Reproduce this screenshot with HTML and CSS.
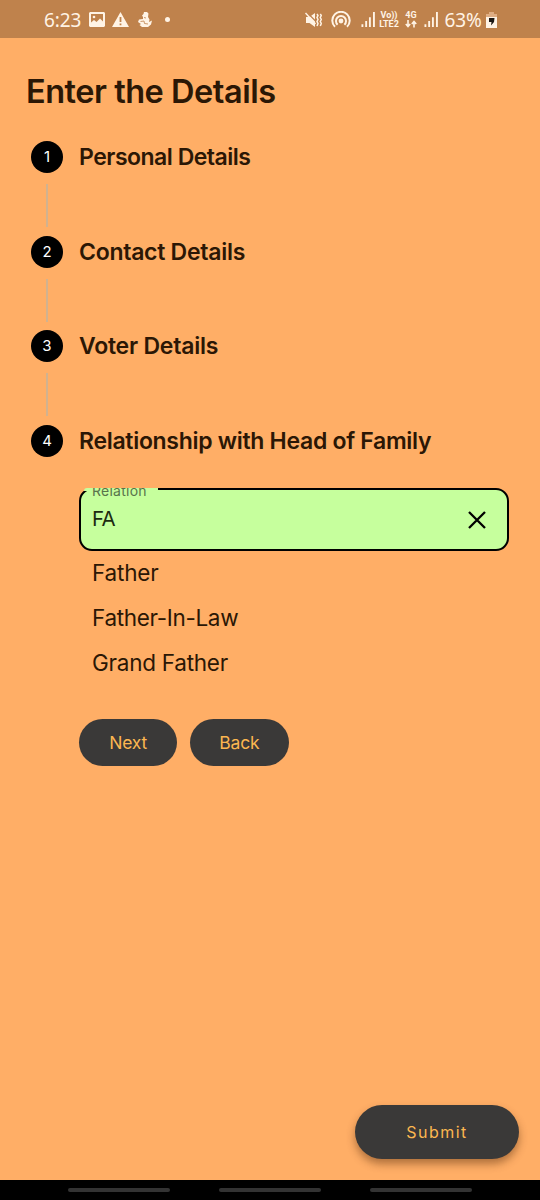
FILE: index.html
```html
<!DOCTYPE html>
<html lang="en">
<head>
<meta charset="utf-8">
<title>Enter the Details</title>
<link rel="stylesheet" href="styles.css">
</head>
<body>
<header class="status">
  <div class="status-left">
    <span class="clock">6:23</span>
    <svg class="i-photo" width="16" height="15" viewBox="0 0 16 15"><path fill-rule="evenodd" d="M1 0h14l1 1v13l-1 1H1l-1-1V1zM2 2v8.500L5 8l2.500 2L11 6.500l3 3V2z"/><circle cx="5" cy="5" r="1.300"/></svg>
    <svg class="i-warn" width="17" height="15" viewBox="0 0 17 15"><path fill-rule="evenodd" d="M8.500 0L17 15H0zM7.600 5v5h1.800V5zM7.600 11.500v1.800h1.800v-1.800z"/></svg>
    <svg class="i-person" width="14" height="15" viewBox="0 0 14 15"><path d="M6 0h3l1.500 1.500L10 5l1.500 2.500L11 10l3-1.500-1 4-3 2.500H4l-2.500-2 1.500-1-3-2 1-2.500L5 7V5L4 3.500 5.500 2z"/><path class="cut" d="M2.500 9.500L6 9l.5 2.500L10 12M6 5.500l2 .5"/></svg>
    <i class="dot"></i>
  </div>
  <div class="status-right">
    <svg class="i-mute" width="17" height="16" viewBox="0 0 17 16"><path d="M1 5h3.500L10 1v14l-5.500-4H1z"/><path class="gap" d="M2.500 1l8 8"/><path class="line thin" d="M.5 1l10 11"/><path class="line thin" d="M12 2l1 1.500-1 2 1 2-1 2 1 2-1 2.500M15.300 2l1 1.500-1 2 1 2-1 2 1 2-1 2.500"/></svg>
    <svg class="i-cast" width="20" height="17" viewBox="0 0 20 17"><circle cx="10" cy="10" r="2.400"/><path class="line bold" d="M6.600 13.700a5 5 0 1 1 6.800 0M4 15.800a8.700 8.700 0 1 1 12 0"/></svg>
    <svg class="i-signal" width="15" height="15" viewBox="0 0 15 16"><path d="M0 13h2v3H0zM4 9.500h2V16H4zM8 5.500h2V16H8zM12.300 0h2v16h-2z"/></svg>
    <span class="net"><b class="volte">Vo))</b><b class="lte">LTE2</b></span>
    <span class="net net-4g"><b>4G</b><svg width="12" height="8" viewBox="0 0 12 8"><path class="line" d="M3 0v6M.8 4L3 6.500 5.200 4M9 7.500V1.500M6.800 4L9 1.500 11.200 4"/></svg></span>
    <svg class="i-signal2" width="15" height="15" viewBox="0 0 15 16"><path d="M0 13h2v3H0zM4 9.500h2V16H4zM8 5.500h2V16H8zM12.300 0h2v16h-2z"/></svg>
    <span class="percent">63%</span>
    <svg class="i-battery" width="11" height="16" viewBox="0 0 11 16"><path class="faded" d="M3 0h5v2h3v4H0V2h3z"/><path d="M0 5h11v11H0z"/><path class="bolt" d="M3 6h5.500L8 10l-3 3.500.5-3.500H3z"/></svg>
  </div>
</header>
<main class="page">
  <h1 class="title">Enter the Details</h1>
  <ol class="steps">
    <li class="step"><div class="rail"><span class="badge">1</span><i class="link"></i></div><h2 class="label l1">Personal Details</h2></li>
    <li class="step"><div class="rail"><span class="badge">2</span><i class="link"></i></div><h2 class="label l2">Contact Details</h2></li>
    <li class="step"><div class="rail"><span class="badge">3</span><i class="link"></i></div><h2 class="label l3">Voter Details</h2></li>
    <li class="step last"><div class="rail"><span class="badge">4</span></div><h2 class="label l4">Relationship with Head of Family</h2></li>
  </ol>
  <section class="form">
    <div class="field">
      <i class="notch"></i>
      <div class="caption-clip"><span class="caption">Relation</span></div>
      <span class="value">FA</span>
      <svg class="clear" width="18" height="18" viewBox="0 0 18 18"><path d="M1 1l16 16M17 1L1 17"/></svg>
    </div>
    <ul class="options">
      <li class="o1">Father</li>
      <li class="o2">Father-In-Law</li>
      <li class="o3">Grand Father</li>
    </ul>
    <div class="actions"><button class="pill next">Next</button><button class="pill back">Back</button></div>
  </section>
  <button class="submit">Submit</button>
</main>
<footer class="nav"><i></i><i></i><i></i></footer>
</body>
</html>
```
FILE: styles.css
```css
* { box-sizing: border-box; }
body {
  margin: 0;
  width: 540px;
  height: 1200px;
  display: flex;
  flex-direction: column;
  overflow: hidden;
  background: #ffae66;
  color: #2b1705;
  font-family: Inter, "Liberation Sans", sans-serif;
}
h1, h2, ol, ul { margin: 0; padding: 0; list-style: none; }
button { border: 0; padding: 0; font-family: inherit; }

.status {
  height: 38px;
  flex: none;
  display: flex;
  justify-content: space-between;
  padding: 0 44px;
  background: #bf824c;
  color: #fff3e5;
  font-family: "Noto Sans", sans-serif;
}
.status svg { fill: #fff3e5; flex: none; display: block; }
.status .line { fill: none; stroke: #fff3e5; stroke-width: 1.6; }
.status .thin { stroke-width: 1.5; }
.status .bold { stroke-width: 2; }
.status .cut { fill: none; stroke: #bf824c; stroke-width: 0.8; }
.status .gap { fill: none; stroke: #bf824c; stroke-width: 1.2; }
.status .faded { fill: #dfad83; }
.status .bolt { fill: #1b1714; }
.status-left, .status-right { display: flex; align-items: center; height: 39px; }
.clock { width: 45px; font-size: 19px; letter-spacing: -0.1px; }
.i-warn { margin-left: 7px; }
.i-person { margin-left: 9px; }
.dot { width: 5px; height: 5px; margin-left: 13px; border-radius: 50%; background: #fff3e5; }
.i-cast { margin-left: 9px; }
.i-signal { margin-left: 10px; }
.net { display: flex; flex-direction: column; align-items: center; width: 21px; margin-left: 3px; }
.net b { font: 700 9px/9px Roboto, sans-serif; }
.net-4g { width: 13px; margin-left: 5px; }
.i-signal2 { margin-left: 6px; }
.percent { width: 41px; margin-left: 6px; font-size: 19px; letter-spacing: -0.1px; }
.status-right { margin-right: -0.500px; }

.page { flex: 1; display: flex; flex-direction: column; }
.title {
  margin: 34px 0 0 26px;
  height: 39px;
  font-size: 32.500px;
  line-height: 40px;
  font-weight: 600;
  letter-spacing: -0.48px;
  white-space: nowrap;
}
.steps { padding: 30px 0 0 31px; }
.step { display: flex; height: 94.500px; gap: 16px; }
.step.last { height: 32px; }
.rail { width: 32px; display: flex; flex-direction: column; align-items: center; }
.badge {
  width: 32px;
  height: 32px;
  border-radius: 50%;
  background: #000;
  color: #fff;
  font-size: 15px;
  line-height: 32px;
  text-align: center;
}
.link { width: 2px; height: 43px; margin: 11px 1px 0 0; background: #d1b28f; }
.label { font-size: 23px; line-height: 32px; font-weight: 600; white-space: nowrap; }
.l1 { letter-spacing: -0.5px; }
.l2 { letter-spacing: -0.27px; }
.l3 { letter-spacing: -0.23px; }
.l4 { letter-spacing: -0.3px; }

.form { padding: 31px 31.500px 0 79px; }
.field {
  position: relative;
  height: 63px;
  padding: 16px 20.500px 0 11px;
  display: flex;
  justify-content: space-between;
  background: #c6ff9d;
  border: 2px solid #000;
  border-radius: 13px;
}
.notch {
  position: absolute;
  left: 3px;
  top: -2px;
  width: 74px;
  height: 3px;
  background: #c6ff9d;
  border-radius: 3px 0 0;
}
.caption-clip {
  position: absolute;
  left: 11px;
  top: -2px;
  height: 12px;
  overflow: hidden;
}
.caption {
  display: block;
  margin-top: -5px;
  color: #59734b;
  font-size: 14px;
  line-height: 16px;
  letter-spacing: 0.25px;
}
.value { color: #1c2b10; font-size: 20.500px; line-height: 25px; letter-spacing: -0.8px; }
.clear { margin-top: 5px; fill: none; stroke: #000; stroke-width: 2.3; }
.options { margin-top: -1px; }
.options li { height: 45px; padding-left: 13px; font-size: 22.500px; line-height: 45px; white-space: nowrap; }
.o1 { letter-spacing: -0.2px; }
.o2 { letter-spacing: -0.33px; }
.o3 { letter-spacing: -0.25px; }
.actions { display: flex; gap: 13px; margin-top: 34px; }
.pill {
  width: 98.300px;
  height: 47px;
  border-radius: 24px;
  background: #3a3938;
  color: #fcb750;
  font-size: 17.500px;
  letter-spacing: -0.15px;
}
.submit {
  align-self: flex-end;
  width: 164px;
  height: 54px;
  margin: auto 21px 21px 0;
  border-radius: 27px;
  background: #3a3938;
  color: #fcb750;
  font-size: 16px;
  letter-spacing: 1.500px;
  box-shadow: 0 5px 9px rgba(80, 40, 10, 0.45);
}
.nav { height: 20px; flex: none; display: flex; gap: 49.500px; padding: 8px 0 0 68px; background: #000; }
.nav i { width: 101.500px; height: 4px; border-radius: 2px; background: #333; }
```
